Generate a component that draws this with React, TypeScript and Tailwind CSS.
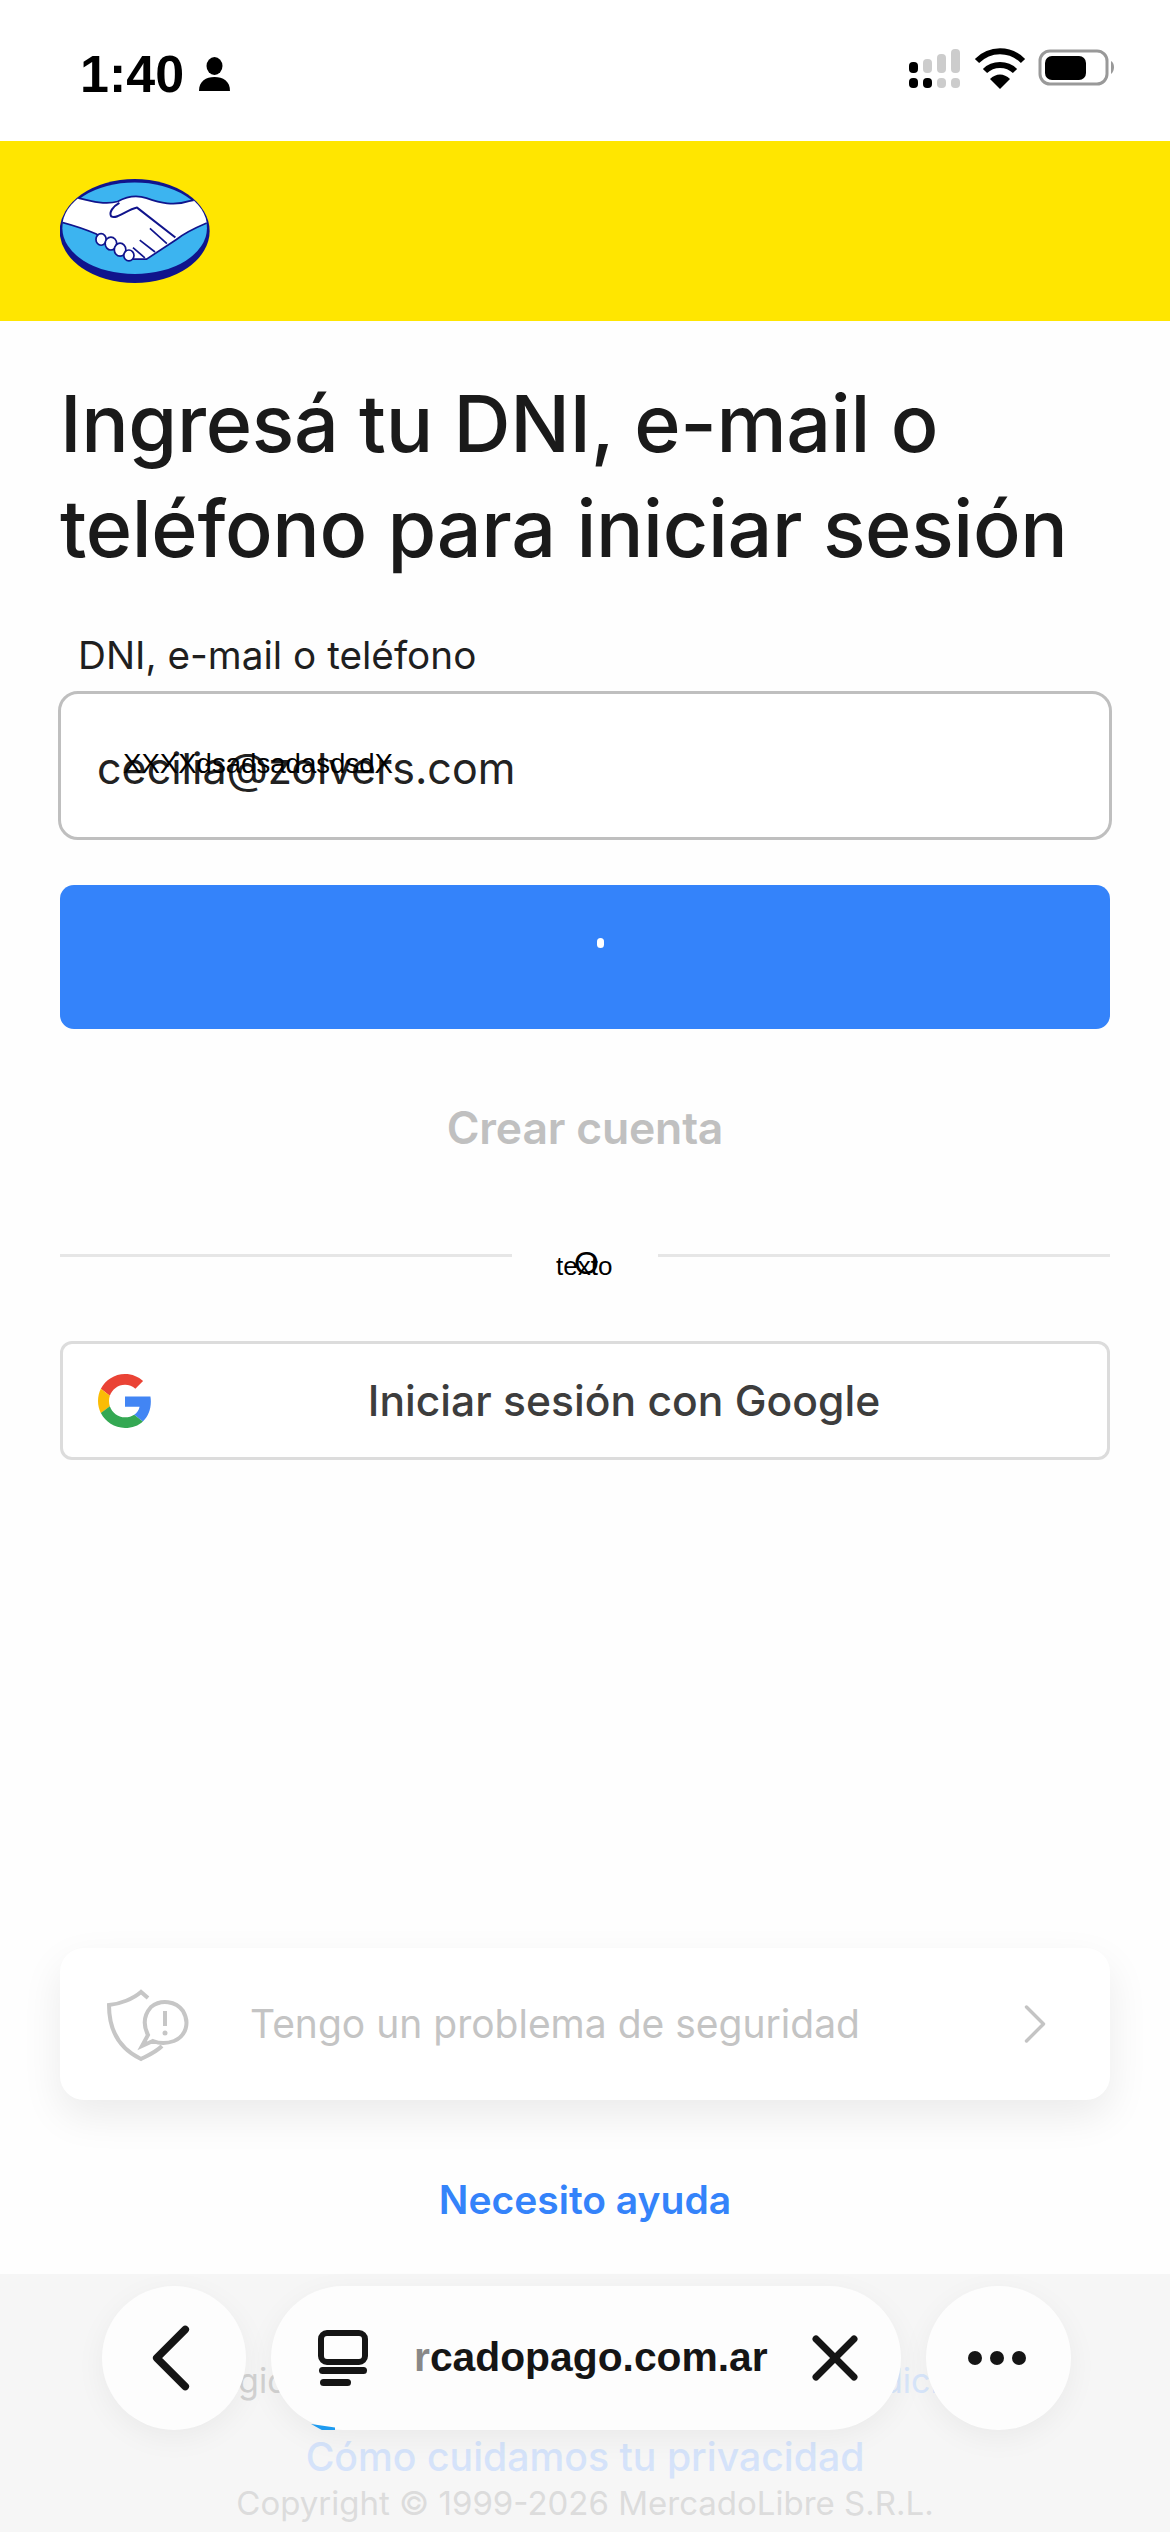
import React from 'react'
import { ChevronLeft, ChevronRight, X } from 'lucide-react'

// ── Status bar pieces ───────────────────────────────────────────────────────

const StatusIcons: React.FC = () => (
  <svg width="212" height="46" viewBox="0 0 212 46">
    <rect x="3" y="14" width="9" height="11" rx="4" fill="#000" />
    <rect x="17" y="11" width="9" height="14" rx="4" fill="#ccc" />
    <rect x="31" y="6" width="9" height="19" rx="4" fill="#ccc" />
    <rect x="45" y="1" width="9" height="24" rx="4" fill="#ccc" />
    <rect x="3" y="30" width="9" height="10" rx="4" fill="#000" />
    <rect x="17" y="30" width="9" height="10" rx="4" fill="#000" />
    <rect x="31" y="30" width="9" height="10" rx="4" fill="#ccc" />
    <rect x="45" y="30" width="9" height="10" rx="4" fill="#ccc" />
    <path d="M71 13 C84 0 104 0 117 13" fill="none" stroke="#000" stroke-width="6" />
    <path d="M79 23 C87 15 101 15 109 23" fill="none" stroke="#000" stroke-width="6" />
    <path d="M84 31 C90 25 98 25 104 31 L94 41 Z" fill="#000" />
    <rect x="134" y="3" width="67" height="33" rx="10" fill="none" stroke="#999" stroke-width="3" />
    <rect x="139" y="8" width="41" height="24" rx="7" fill="#000" />
    <path d="M205 13 C209 15 209 23 205 26 Z" fill="#999" />
  </svg>
)

const PersonIcon: React.FC = () => (
  <svg width="33" height="34" viewBox="0 0 33 34">
    <ellipse cx="16.5" cy="9" rx="8" ry="9" fill="#000" />
    <path d="M1 34 C1 24 8 20 16.5 20 C25 20 32 24 32 34 Z" fill="#000" />
  </svg>
)

// ── Logos ───────────────────────────────────────────────────────────────────

const MercadoLogo: React.FC = () => (
  <svg width="150" height="106" viewBox="65 58 442 310">
    <defs>
      <clipPath id="inner">
        <ellipse cx="285" cy="200" rx="213" ry="134" />
      </clipPath>
    </defs>
    <ellipse cx="285" cy="213" rx="221" ry="153" fill="#10148c" />
    <ellipse cx="285" cy="205" rx="213" ry="135" fill="#3cb4f0" />
    <g clipPath="url(#inner)">
      <path
        d="M50 182 C90 192 135 205 172 222 L270 296 L320 296 L408 238 C430 220 470 200 520 180 L520 110 L445 125 C400 140 360 130 320 116 C290 106 260 112 235 126 C200 136 160 126 120 116 L50 110 Z"
        fill="#fff"
        stroke="#10148c"
        stroke-width="5"
      />
    </g>
    <path d="M240 130 C222 140 208 158 216 170 C232 180 262 150 292 144 L405 232" fill="#fff" stroke="#10148c" stroke-width="6" stroke-linejoin="round" />
    <path d="M330 205 L380 250 M300 240 L345 275 M280 262 L315 292" fill="none" stroke="#10148c" stroke-width="5" />
    <g fill="#fff" stroke="#10148c" stroke-width="5">
      <ellipse cx="186" cy="238" rx="15" ry="17" />
      <ellipse cx="215" cy="250" rx="17" ry="19" />
      <ellipse cx="242" cy="268" rx="17" ry="19" />
      <ellipse cx="268" cy="285" rx="15" ry="16" />
    </g>
  </svg>
)

const GoogleLogo: React.FC = () => (
  <svg width="54" height="54" viewBox="0 0 48 48">
    <path fill="#EA4335" d="M24 9.5c3.54 0 6.71 1.22 9.21 3.6l6.85-6.85C35.9 2.38 30.47 0 24 0 14.62 0 6.51 5.38 2.56 13.22l7.98 6.19C12.43 13.72 17.74 9.5 24 9.5z" />
    <path fill="#4285F4" d="M46.98 24.55c0-1.57-.15-3.09-.38-4.55H24v9.02h12.94c-.58 2.96-2.26 5.48-4.78 7.18l7.73 6c4.51-4.18 7.09-10.36 7.09-17.65z" />
    <path fill="#FBBC05" d="M10.53 28.59c-.48-1.45-.76-2.99-.76-4.59s.27-3.14.76-4.59l-7.98-6.19C.92 16.46 0 20.12 0 24c0 3.88.92 7.54 2.56 10.78l7.97-6.19z" />
    <path fill="#34A853" d="M24 48c6.48 0 11.93-2.13 15.89-5.81l-7.73-6c-2.15 1.45-4.92 2.3-8.16 2.3-6.26 0-11.57-4.22-13.47-9.91l-7.98 6.19C6.51 42.62 14.62 48 24 48z" />
  </svg>
)

const ShieldIcon: React.FC = () => (
  <svg width="84" height="78" viewBox="0 0 84 78" fill="none" stroke="#c6c6c6" stroke-width="4">
    <path d="M42 13 L35 7 C27 14 14 19 3 20 C3 40 10 62 35 74 C43 70 50 67 56 61" />
    <path d="M36 61 L42 50 C37 40 38 30 45 22 C55 14 70 16 77 26 C84 38 80 51 68 56 C60 59 52 58 47 56 Z" />
    <path d="M59 26 L59 41" stroke-width="4" />
    <circle cx="59" cy="48" r="2.5" fill="#c6c6c6" stroke="none" />
  </svg>
)

const TabsIcon: React.FC = () => (
  <svg width="50" height="56" viewBox="0 0 50 56" fill="none">
    <rect x="3" y="3" width="44" height="29" rx="6" stroke="#151515" stroke-width="6" />
    <rect x="1" y="37" width="48" height="7" rx="3.5" fill="#151515" />
    <rect x="2" y="49" width="31" height="7" rx="3.5" fill="#151515" />
  </svg>
)

// ── Page ────────────────────────────────────────────────────────────────────

export default function App() {
  return (
    <div className="relative w-[1170px] h-[2532px] overflow-hidden bg-[#fefefe] font-['Inter',sans-serif] text-[#1a1a1a]">
      <div className="h-[141px] bg-white flex items-center justify-between pl-[80px] pr-[52px]">
        <div className="flex items-center gap-[14px] pt-[6px]">
          <span className="text-[52px] font-bold leading-none text-black font-['Liberation_Sans',sans-serif]">1:40</span>
          <PersonIcon />
        </div>
        <StatusIcons />
      </div>

      <header className="h-[180px] bg-[#ffe600] flex items-center pl-[60px]">
        <MercadoLogo />
      </header>

      <main className="px-[60px]">
        <h1 className="pt-[50px] text-[79px] leading-[105px] font-medium tracking-[-0.35px] whitespace-nowrap">
          Ingresá tu DNI, e-mail o<br />teléfono para iniciar sesión
        </h1>

        <label className="block pl-[18px] mt-[51px] text-[38.7px] leading-[46px] font-normal text-[#1f1f1f]">DNI, e-mail o teléfono</label>

        <div className="relative -mx-[2px] mt-[13px] h-[149px] rounded-[20px] border-[3px] border-[#bfbfbf] bg-white flex items-center pl-[36px]">
          <span className="text-[43px] leading-none font-normal text-[#222] pt-[6px]">cecilia@zolvers.com</span>
          <span className="absolute left-[62px] top-[55px] text-[27.6px] leading-[30px] text-black font-['Liberation_Sans',sans-serif]">XXXXdsadsadasdsdX</span>
        </div>

        <div className="mt-[45px] h-[144px] rounded-[14px] bg-[#3483fa] flex justify-center">
          <div className="mt-[53px] ml-[30px] w-[7px] h-[10px] rounded-full bg-white" />
        </div>

        <div className="mt-[69px] h-[60px] flex items-center justify-center text-[44.5px] font-semibold text-[#c0c0c0] tracking-[-0.2px]">Crear cuenta</div>

        <div className="relative mt-[90px] h-[59px] flex items-start justify-between">
          <div className="mt-[6px] w-[452px] h-[3px] bg-[#e6e6e6]" />
          <div className="mt-[6px] w-[452px] h-[3px] bg-[#e6e6e6]" />
          <span className="absolute left-[496px] top-[3px] text-[26px] leading-[30px] text-black font-['Liberation_Sans',sans-serif]">texto</span>
          <span className="absolute left-[514px] top-[-3px] text-[32px] leading-[36px] text-black font-['Liberation_Sans',sans-serif]">O</span>
        </div>

        <div className="relative mt-[34px] h-[119px] rounded-[12px] border-[3px] border-[#dcdcdc] bg-white flex items-center justify-center pl-[78px]">
          <span className="text-[42.6px] font-medium text-[#3d3d3d]">Iniciar sesión con Google</span>
          <div className="absolute left-[35px] top-[30px]">
            <GoogleLogo />
          </div>
        </div>

        <div className="mt-[488px] h-[152px] rounded-[24px] bg-white shadow-[0_16px_40px_rgba(0,0,0,0.08)] flex items-center pl-[46px] pr-[41px]">
          <ShieldIcon />
          <span className="ml-[60px] flex-1 text-[39px] text-[#c4c4c4]">Tengo un problema de seguridad</span>
          <ChevronRight size={68} strokeWidth={1.2} className="text-[#c4c4c4]" />
        </div>

        <div className="mt-[76px] text-center text-[39px] leading-[48px] font-semibold text-[#3483fa]">Necesito ayuda</div>
      </main>

      {/* footer that scrolls underneath the browser bar */}
      <footer className="absolute left-0 right-0 top-[2274px] bottom-0 bg-[#f6f6f6] flex flex-col items-center">
        <div className="mt-[85px] h-[44px] text-[34px] leading-[44px] text-[#d2d2d2] whitespace-nowrap">Protegido por reCAPTCHA - <span className="text-[#d8e6fb]">Privacidad</span> - <span className="text-[#d8e6fb]">Condiciones</span></div>
        <div className="mt-[28px] text-[39.2px] leading-[52px] font-medium text-[#d5e3fa]">Cómo cuidamos tu privacidad</div>
        <div className="-mt-[2px] text-[33px] leading-[44px] text-[#dcdcdc] whitespace-nowrap">Copyright © 1999-2026 MercadoLibre S.R.L.</div>
      </footer>

      {/* floating browser controls */}
      <nav className="absolute left-[102px] top-[2286px] flex gap-[25px]">
        <button className="w-[144px] h-[144px] rounded-full bg-[#fdfdfd] shadow-[0_8px_30px_rgba(0,0,0,0.05)] flex items-center justify-center">
          <ChevronLeft size={114} strokeWidth={1.6} className="text-[#151515] -ml-[6px]" />
        </button>
        <div className="relative w-[630px] h-[144px] rounded-full bg-[#fdfdfd] shadow-[0_8px_30px_rgba(0,0,0,0.05)] flex items-center pl-[47px]">
          <TabsIcon />
          <span className="ml-[46px] text-[40.8px] font-semibold text-[#151515] font-['Liberation_Sans',sans-serif]"><span className="text-[#888]">r</span>cadopago.com.ar</span>
          <X size={76} strokeWidth={2.2} className="text-[#151515] ml-[29px]" />
          <div className="absolute left-[40px] bottom-0 w-[24px] h-[6px] bg-[#1e9bf0] [clip-path:polygon(0_0,100%_60%,100%_100%,45%_100%)]" />
        </div>
        <button className="w-[145px] h-[144px] rounded-full bg-[#fdfdfd] shadow-[0_8px_30px_rgba(0,0,0,0.05)] flex items-center justify-center gap-[8px] pr-[4px]">
          <span className="w-[14px] h-[14px] rounded-full bg-[#151515]" />
          <span className="w-[14px] h-[14px] rounded-full bg-[#151515]" />
          <span className="w-[14px] h-[14px] rounded-full bg-[#151515]" />
        </button>
      </nav>
    </div>
  )
}
